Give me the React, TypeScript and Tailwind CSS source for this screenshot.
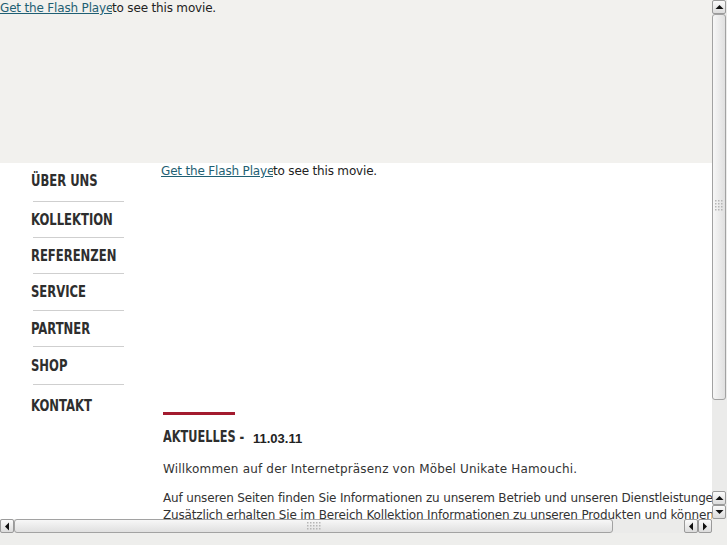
import React from 'react';

const navItems = [
  { label: 'ÜBER UNS', pad: 'pt-[7px] pb-[12px]' },
  { label: 'KOLLEKTION', pad: 'pt-[10px] pb-[9px]' },
  { label: 'REFERENZEN', pad: 'pt-[10px] pb-[9px]' },
  { label: 'SERVICE', pad: 'pt-[10px] pb-[10px]' },
  { label: 'PARTNER', pad: 'pt-[10px] pb-[9px]' },
  { label: 'SHOP', pad: 'pt-[11px] pb-[10px]' },
  { label: 'KONTAKT', pad: 'pt-[13px]' },
];

const Arrow = ({ dir }: { dir: 'up' | 'down' | 'left' | 'right' }) => {
  const pts = {
    up: '0.5,5 4.5,1 8.5,5',
    down: '0.5,1 4.5,5 8.5,1',
    left: '5,0.5 1,4.5 5,8.5',
    right: '1,0.5 5,4.5 1,8.5',
  }[dir];
  const vert = dir === 'up' || dir === 'down';
  return (
    <svg width={vert ? 9 : 6} height={vert ? 6 : 9} viewBox={vert ? '0 0 9 6' : '0 0 6 9'}>
      <polygon points={pts} fill="#111" />
    </svg>
  );
};

const Btn = ({ dir }: { dir: 'up' | 'down' | 'left' | 'right' }) => (
  <div className="flex h-[14px] w-[14px] shrink-0 items-center justify-center rounded-[2px] border border-[#9a9a9a] bg-gradient-to-b from-[#fbfbfb] to-[#dcdcdc]">
    <Arrow dir={dir} />
  </div>
);

const Grip = ({ vertical }: { vertical?: boolean }) => (
  <svg width={vertical ? 10 : 16} height={vertical ? 16 : 10}>
    {Array.from({ length: vertical ? 4 : 3 }).map((_, r) =>
      Array.from({ length: vertical ? 3 : 5 }).map((_, c) => (
        <rect key={`${r}-${c}`} x={1 + c * 3} y={1 + r * 3} width={1.5} height={1.5} fill="#b5b5b5" />
      ))
    )}
  </svg>
);

export default function App() {
  return (
    <div className="flex h-[545px] w-[727px] flex-col overflow-hidden bg-[#eeeeec] font-['DejaVu_Sans',sans-serif]">
      <div className="flex h-[519px]">
        <div className="w-[712px] shrink-0 overflow-hidden bg-white">
          <div className="h-[163px] bg-[#f2f1ee] text-[12px] leading-[15px] tracking-[-0.17px] text-[#222]">
            <div className="flex pt-[1px] whitespace-nowrap">
              <span className="inline-block w-[112px] overflow-hidden text-[#1f5f73] underline">Get the Flash Player</span>
              <span>to see this movie.</span>
            </div>
          </div>
          <div className="flex">
            <ul className="w-[161px] shrink-0 pl-[31px] pt-[3px] font-['DejaVu_Sans_Condensed',sans-serif] text-[15px] font-bold leading-[16px] text-[#2e2e2e]">
              {navItems.map((item, i) => (
                <li key={item.label}>
                  <div className={item.pad}>
                    <span className="inline-block origin-left scale-x-[0.86] whitespace-nowrap">{item.label}</span>
                  </div>
                  {i < navItems.length - 1 && <div className="ml-[2px] h-px w-[91px] bg-[#cfcfcf]" />}
                </li>
              ))}
            </ul>
            <div className="w-[800px] shrink-0 text-[12px] leading-[17px] text-[#333]">
              <div className="flex h-[246px] pt-[1px] whitespace-nowrap leading-[15px] tracking-[-0.17px] text-[#222]">
                <span className="inline-block h-[15px] w-[112px] overflow-hidden text-[#1f5f73] underline">Get the Flash Player</span>
                <span>to see this movie.</span>
              </div>
              <div className="ml-[2px] mt-[3px] h-[3px] w-[72px] bg-[#a31b2f]" />
              <div className="mt-[14px] flex items-baseline pl-[2px]">
                <span className="inline-block w-[90px] whitespace-nowrap">
                  <span className="inline-block origin-left scale-x-[0.84] font-['DejaVu_Sans_Condensed',sans-serif] text-[15px] font-bold text-[#2e2e2e]">AKTUELLES -</span>
                </span>
                <span className="relative top-[1px] font-['Liberation_Sans',sans-serif] text-[13px] font-bold text-[#222]">11.03.11</span>
              </div>
              <div className="mt-[14px] pl-[2px] whitespace-nowrap">
                <p className="tracking-[0.18px]">Willkommen auf der Internetpräsenz von Möbel Unikate Hamouchi.</p>
                <p className="mt-[12px] tracking-[-0.16px]">
                  Auf unseren Seiten finden Sie Informationen zu unserem Betrieb und unseren Dienstleistungen.
                  <br />
                  Zusätzlich erhalten Sie im Bereich Kollektion Informationen zu unseren Produkten und können sich
                </p>
              </div>
            </div>
          </div>
        </div>
        <div className="flex w-[15px] flex-col bg-[#ebebea]">
          <Btn dir="up" />
          <div className="flex h-[386px] w-[14px] items-center justify-center rounded-[3px] border border-[#a2a2a2] bg-gradient-to-r from-[#f7f7f7] to-[#e0e0e0]">
            <Grip vertical />
          </div>
          <div className="flex-1" />
          <Btn dir="up" />
          <Btn dir="down" />
        </div>
      </div>
      <div className="flex h-[14px] w-[712px] bg-[#ebebea]">
        <Btn dir="left" />
        <div className="flex h-[14px] w-[599px] items-center justify-center rounded-[3px] border border-[#a2a2a2] bg-gradient-to-b from-[#f7f7f7] to-[#e0e0e0]">
          <Grip />
        </div>
        <div className="flex-1" />
        <Btn dir="left" />
        <Btn dir="right" />
      </div>
    </div>
  );
}
